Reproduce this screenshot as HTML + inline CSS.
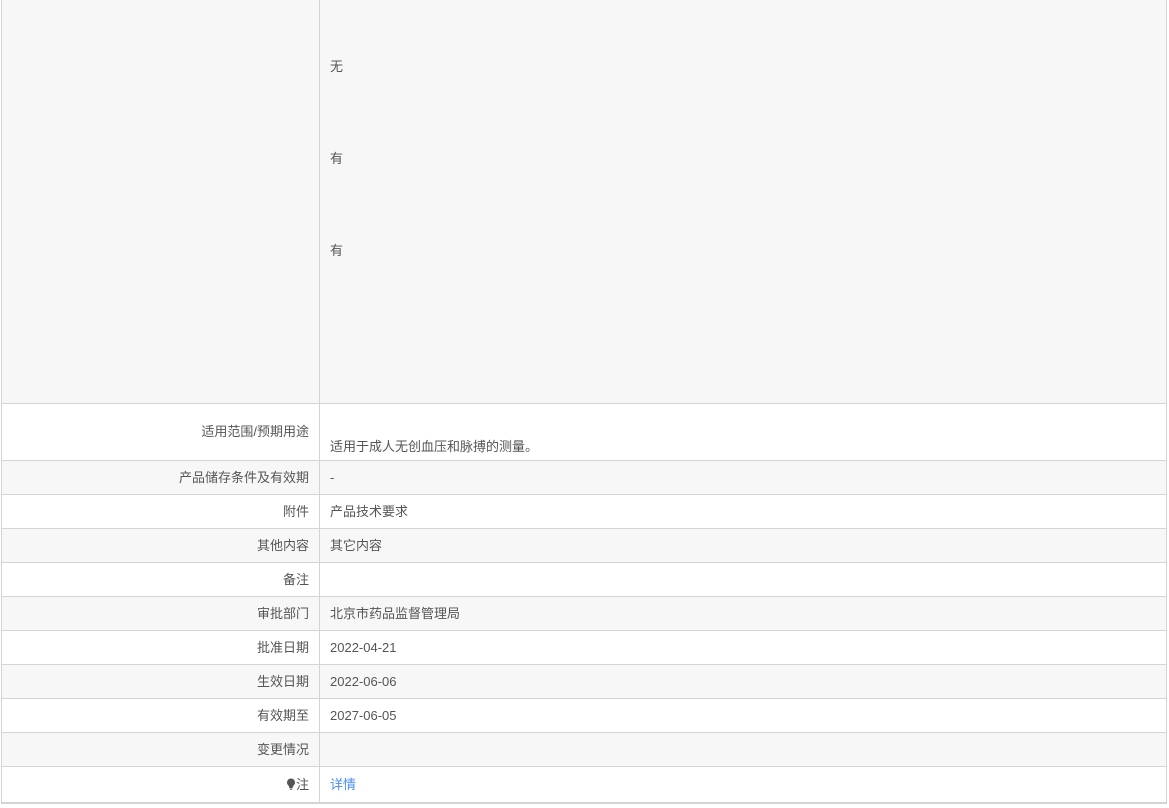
<!DOCTYPE html>
<html><head><meta charset="utf-8"><style>
body{margin:0;width:1169px;height:808px;background:#fff;font-family:"Liberation Sans","Noto Sans CJK SC",sans-serif;font-size:13px;color:#555;position:relative;overflow:hidden}
.r{position:absolute;left:1px;width:1166px;border-left:1px solid #d4d4d4;border-right:1px solid #d4d4d4;border-top:1px solid #d4d4d4;box-sizing:border-box}
.g{background:#f7f7f7}
.l{position:absolute;left:0;width:318px;top:0;bottom:0;border-right:1px solid #d4d4d4;text-align:right;box-sizing:border-box;padding-right:10px}
.v{position:absolute;left:328px;top:0}
.t{position:absolute}
</style></head><body>
<div class="r g" style="top:-1px;height:405px;border-top:none"><div class="l"></div>
<div class="t" style="left:328px;top:57px">无</div>
<div class="t" style="left:328px;top:149px">有</div>
<div class="t" style="left:328px;top:241px">有</div></div>
<div class="r" style="top:403px;height:58px"><div class="l" style="line-height:56px">适用范围/预期用途</div><div class="v" style="top:32px">适用于成人无创血压和脉搏的测量。</div></div>
<div class="r g" style="top:460px;height:35px;line-height:33px"><div class="l">产品储存条件及有效期</div><div class="v">-</div></div>
<div class="r" style="top:494px;height:35px;line-height:33px"><div class="l">附件</div><div class="v">产品技术要求</div></div>
<div class="r g" style="top:528px;height:35px;line-height:33px"><div class="l">其他内容</div><div class="v">其它内容</div></div>
<div class="r" style="top:562px;height:35px;line-height:33px"><div class="l">备注</div><div class="v"></div></div>
<div class="r g" style="top:596px;height:35px;line-height:33px"><div class="l">审批部门</div><div class="v">北京市药品监督管理局</div></div>
<div class="r" style="top:630px;height:35px;line-height:33px"><div class="l">批准日期</div><div class="v">2022-04-21</div></div>
<div class="r g" style="top:664px;height:35px;line-height:33px"><div class="l">生效日期</div><div class="v">2022-06-06</div></div>
<div class="r" style="top:698px;height:35px;line-height:33px"><div class="l">有效期至</div><div class="v">2027-06-05</div></div>
<div class="r g" style="top:732px;height:35px;line-height:33px"><div class="l">变更情况</div><div class="v"></div></div>
<div class="r" style="top:766px;height:38px;line-height:36px;border-bottom:2px solid #d4d4d4"><div class="l"><svg width="10" height="12" viewBox="0 0 10 12" style="vertical-align:-1px"><path d="M5 0.5a4 4 0 0 1 2.5 7.1L6.5 10h-3L2.5 7.6A4 4 0 0 1 5 0.5z" fill="#555"/><rect x="3.8" y="10.5" width="2.4" height="1.2" fill="#555"/></svg>注</div><div class="v" style="color:#4a8ef0">详情</div></div>
</body></html>
